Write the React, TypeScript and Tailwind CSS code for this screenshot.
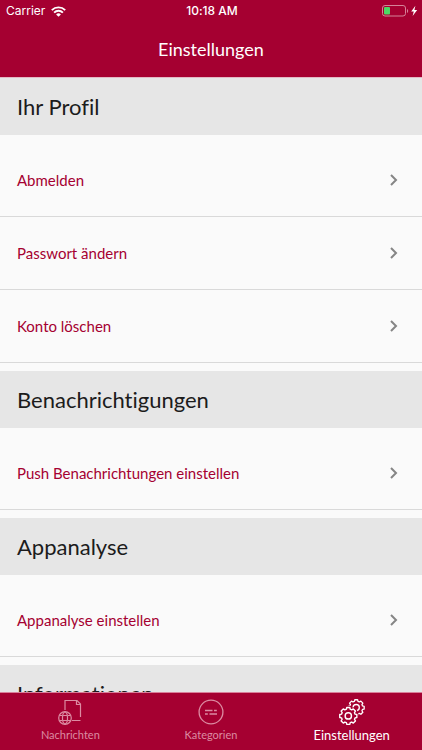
import type { ReactNode } from "react";

type Section = {
  title: string;
  items: string[];
};

const sections: Section[] = [
  { title: "Ihr Profil", items: ["Abmelden", "Passwort ändern", "Konto löschen"] },
  { title: "Benachrichtigungen", items: ["Push Benachrichtungen einstellen"] },
  { title: "Appanalyse", items: ["Appanalyse einstellen"] },
  { title: "Informationen", items: [] }
];

function WifiIcon() {
  return (
    <svg viewBox="0 0 15 11" className="h-[11px] w-[15px]" aria-hidden="true">
      <g fill="none" stroke="currentColor" strokeWidth="1.9">
        <path d="M0.8 4.1a9.6 9.6 0 0 1 13.4 0" />
        <path d="M3.1 6.6a6.3 6.3 0 0 1 8.8 0" />
      </g>
      <path d="M7.5 10.8 5.1 8.4a3.4 3.4 0 0 1 4.8 0z" fill="currentColor" />
    </svg>
  );
}

function BatteryIcon() {
  return (
    <svg viewBox="0 0 36 12" className="h-3 w-9" aria-hidden="true">
      <rect x="0.5" y="0.5" width="23" height="10.5" rx="2.5" fill="none" stroke="#d58399" />
      <path d="M25 4v4c1.6-.5 1.6-3.5 0-4z" fill="#d58399" />
      <rect x="2" y="2" width="6" height="7.5" rx="1" fill="#4cd964" />
      <path d="M33.4.8 29.2 6.6h2.6l-1.2 4.4 4.6-6h-2.8z" fill="currentColor" />
    </svg>
  );
}

function ChevronIcon() {
  return (
    <svg viewBox="0 0 8 12" className="h-3 w-2 shrink-0 text-[#858585]" aria-hidden="true">
      <path d="M1 1l5 5-5 5" fill="none" stroke="currentColor" strokeWidth="2" />
    </svg>
  );
}

function NewsIcon() {
  return (
    <svg viewBox="0 0 24 26" className="h-[26px] w-6" aria-hidden="true">
      <g fill="none" stroke="currentColor" strokeWidth="1.2">
        <path d="M7 11V1.5h12l3.500 3.500V18M14 21.500h8.500" />
        <path d="M18.500 1.500v4h4" />
        <circle cx="7" cy="19" r="6.300" />
        <rect x="4.500" y="16.500" width="5" height="5" rx="1" />
        <path d="M4.500 16.500c.3-1.700 1.200-3 2.500-3.700 1.300.7 2.200 2 2.500 3.700M4.500 21.500c.3 1.700 1.200 3 2.500 3.700 1.300-.7 2.200-2 2.500-3.700" />
        <path d="M1.500 16.500h3M1.500 21.500h3M9.500 16.500h3M9.500 21.500h3" />
      </g>
    </svg>
  );
}

function CategoriesIcon() {
  return (
    <svg viewBox="0 0 26 26" className="h-[26px] w-[26px]" aria-hidden="true">
      <g fill="none" stroke="currentColor" strokeWidth="1.3">
        <circle cx="13" cy="13" r="11.900" />
        <path d="M7 11.500h7.500M16 11.500h2.800M7 15h2.800M11.500 15H19" />
      </g>
    </svg>
  );
}

// One eight-toothed gear, its middle at 0, 1.6
const gearPath =
  "M-1.7-8h3.4l.5 2 1.7.7 1.8-1 2.4 2.4-1.1 1.8.7 1.700 2 .4v3.400l-2 .4-.7 1.600 1.100 1.900-2.400 2.400-1.800-1.100-1.700.7-.5 1.900h-3.400l-.5-1.900-1.700-.7-1.800 1.100-2.400-2.400 1.100-1.900-.7-1.600-2-.4V0l2-.4.7-1.700-1.100-1.800 2.400-2.400 1.800 1 1.700-.7z";

function SettingsIcon() {
  return (
    <svg viewBox="0 0 26 26" className="h-[26px] w-[26px]" aria-hidden="true">
      <g stroke="currentColor" strokeWidth="1.6" strokeLinejoin="round">
        <g transform="translate(17.2 7.3) scale(.82)" fill="none">
          <path d={gearPath} />
          <circle cx="0" cy="1.6" r="3.800" />
        </g>
        <g transform="translate(9.300 15.500) scale(.88)" fill="#a50031">
          <path d={gearPath} stroke="#a50031" strokeWidth="4" />
          <path d={gearPath} />
          <circle cx="0" cy="1.6" r="3.600" />
        </g>
      </g>
    </svg>
  );
}

type TabProps = {
  label: string;
  icon: ReactNode;
  active?: boolean;
};

function Tab({ label, icon, active = false }: TabProps) {
  return (
    <button
      type="button"
      aria-current={active ? "page" : undefined}
      className={[
        "flex flex-1 flex-col items-center gap-px pt-1.5",
        active ? "text-[13px] text-white" : "text-[11px] text-[#dc8ba2]"
      ].join(" ")}
    >
      {icon}
      <span className="leading-[18px]">{label}</span>
    </button>
  );
}

export default function App() {
  return (
    <div className="flex h-screen flex-col bg-[#fafafa] font-['Lato',sans-serif] [font-variant-ligatures:none]">
      <header className="shrink-0 border-b border-[#e3b9c5] bg-[#a50031] text-white">
        <div className="grid grid-cols-3 items-center pt-0.5 pr-1 pl-1.5 font-['Inter',sans-serif] text-xs leading-[18px]">
          <span className="flex items-center gap-1.5">
            Carrier
            <WifiIcon />
          </span>
          <span className="text-center font-medium">10:18 AM</span>
          <span className="flex justify-end">
            <BatteryIcon />
          </span>
        </div>
        <h1 className="pt-[17px] pb-4 text-center text-lg leading-6">Einstellungen</h1>
      </header>

      <main className="min-h-0 flex-1 overflow-y-auto [scrollbar-width:none]">
        {sections.map((section) => (
          <section key={section.title} className="pb-2">
            <h2 className="mb-[9px] bg-[#e6e6e6] px-[17px] text-[22px] leading-[57px] text-[#1c1c1c]">
              {section.title}
            </h2>
            <ul>
              {section.items.map((item) => (
                <li key={item} className="border-b border-[#d9d9d9]">
                  <button
                    type="button"
                    className="flex h-[72px] w-full items-center justify-between pr-6 pl-[17px] text-left text-[15px] text-[#a50031]"
                  >
                    {item}
                    <ChevronIcon />
                  </button>
                </li>
              ))}
            </ul>
          </section>
        ))}
      </main>

      <nav className="flex h-[58px] shrink-0 border-t border-[#d9809a] bg-[#a50031]">
        <Tab label="Nachrichten" icon={<NewsIcon />} />
        <Tab label="Kategorien" icon={<CategoriesIcon />} />
        <Tab label="Einstellungen" icon={<SettingsIcon />} active />
      </nav>
    </div>
  );
}
